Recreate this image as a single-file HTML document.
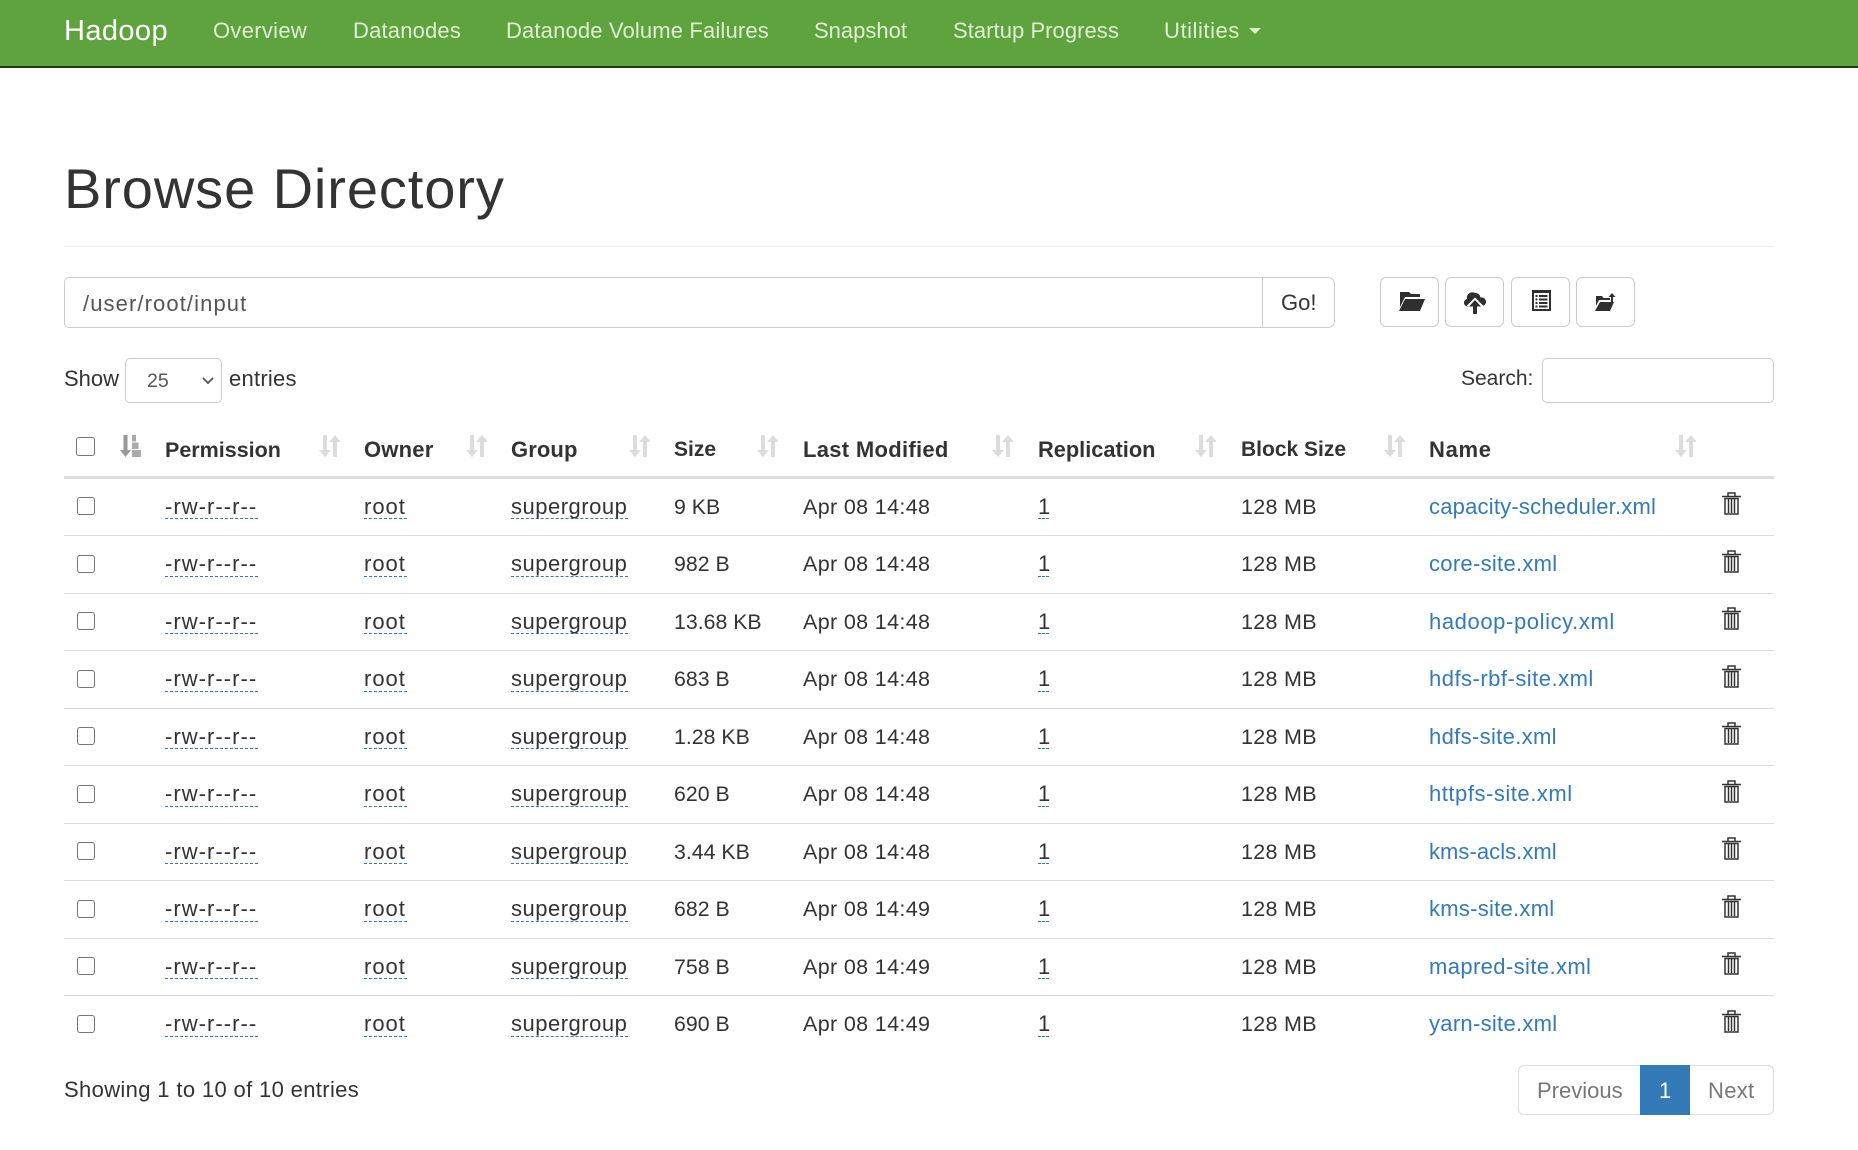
<!DOCTYPE html>
<html lang="en"><head><meta charset="utf-8"><title>Browsing HDFS</title>
<style>
html,body{margin:0;padding:0;background:#fff}
body{width:1858px;height:1150px;position:relative;overflow:hidden;font-family:"Liberation Sans",sans-serif;font-size:22px;line-height:30px;color:#333}
.a{position:absolute;white-space:nowrap}
.nav{position:absolute;left:0;top:0;width:1858px;height:66px;background:#5fa33e;border-bottom:2px solid #1f3d12}
.n{position:absolute;top:16px;color:#dfeed3;white-space:nowrap}
.box{position:absolute;box-sizing:border-box;border:1.5px solid #ccc;background:#fff}
.cb{position:absolute;box-sizing:border-box;border:1.5px solid #767676;border-radius:3px;background:#fff}
.r{position:absolute;left:0;width:1858px;height:58px}
.l{position:absolute;left:64px;width:1710px;height:1px;background:#ddd;top:57px}
.t{position:absolute;top:13.500px;white-space:nowrap}
.u{position:absolute;top:13.500px;white-space:nowrap;height:26.500px;border-bottom:1.5px dashed #337ab7;box-sizing:content-box}
.w{left:165px;width:93px;letter-spacing:1.04px}
.o{left:364px;width:43px;letter-spacing:1px}
.g{left:511px;width:117px;letter-spacing:.5px}
.e{left:1038px;width:11px}
.z{left:674px;font-size:21.3px}
.d{left:803px;font-size:21.5px;letter-spacing:.35px}
.b{left:1241px;font-size:21.5px;letter-spacing:.3px}
.k{color:#337ab7;left:1429px}
.h{position:absolute;top:435px;font-weight:bold;white-space:nowrap}
svg{position:absolute;display:block;overflow:visible}
</style></head><body>
<svg width="0" height="0" style="position:absolute"><defs>
<symbol id="s" viewBox="0 0 21 22"><path d="M4 0h4v15h4l-6 7-6-7h4zM14 22V7h-4l6-7 6 7h-4v15z" fill="#dcdcdc"/></symbol>
<symbol id="s1" viewBox="0 0 21 22"><path d="M3.500 0h4v15h3.500l-5.500 7-5.500-7h3.500z" fill="#999"/><path d="M12 0h4v6.500h-4zM12 7.500h6.500v6.500H12zM12 15h9v7h-9z" fill="#aaa"/></symbol>
<symbol id="tr" viewBox="0 0 19 23"><path d="M6 4V1h7v3M0 4.500h19M3 6.500h13v15.500H3zM6.500 7v14M9.500 7v14M12.500 7v14" fill="none" stroke="#333" stroke-width="1.500"/></symbol>
</defs></svg>

<div class="nav"></div>
<div class="a" style="left:64px;top:16px;color:#fff;font-size:29px;letter-spacing:.4px">Hadoop</div>
<div class="n" style="left:213px;letter-spacing:.3px">Overview</div>
<div class="n" style="left:353px;letter-spacing:.18px">Datanodes</div>
<div class="n" style="left:506px;letter-spacing:.15px">Datanode Volume Failures</div>
<div class="n" style="left:814px">Snapshot</div>
<div class="n" style="left:953px;letter-spacing:.05px">Startup Progress</div>
<div class="n" style="left:1164px;letter-spacing:.55px">Utilities</div>
<svg style="left:1249px;top:28px" width="12" height="7"><path d="M0 0h12L6 6z" fill="#dfeed3"/></svg>

<div class="a" style="left:64px;top:154px;font-size:56px;line-height:70px;letter-spacing:.9px">Browse Directory</div>
<div class="a" style="left:64px;top:246px;width:1710px;height:1px;background:#eee"></div>

<div class="box" style="left:64px;top:277px;width:1199px;height:51px;border-radius:5px 0 0 5px"></div>
<div class="a" style="left:83px;top:289px;color:#555;letter-spacing:1.1px">/user/root/input</div>
<div class="box" style="left:1262px;top:277px;width:73px;height:51px;border-radius:0 7px 7px 0"></div>
<div class="a" style="left:1281px;top:288px">Go!</div>

<div class="box" style="left:1380px;top:277px;width:59px;height:50px;border-radius:6px"></div>
<div class="box" style="left:1445px;top:277px;width:59px;height:50px;border-radius:6px"></div>
<div class="box" style="left:1511px;top:277px;width:59px;height:50px;border-radius:6px"></div>
<div class="box" style="left:1576px;top:277px;width:59px;height:50px;border-radius:6px"></div>
<svg style="left:1399px;top:292px" width="26" height="19"><path d="M1 0h9l2 2h9v3H6L1 15zM6 7h20l-5 12H0z" fill="#2f2f2f"/></svg>
<svg style="left:1464px;top:292px" width="22" height="22"><path d="M5 14a3.500 3.500 0 0 1-5-3 4 4 0 0 1 3-4 5.500 5.500 0 0 1 8-6 5 5 0 0 1 5.500 4.500A4.500 4.500 0 0 1 22 9.500 4 4 0 0 1 18 14z" fill="#2f2f2f"/><path d="M11 5.500l8.500 8.500H15v8H7v-8H2.500z" fill="#fff"/><path d="M11 8l6 6.500h-4V22H9v-7.500H5z" fill="#2f2f2f"/></svg>
<svg style="left:1532px;top:290px" width="19" height="21"><path fill-rule="evenodd" d="M0 0h19v21H0zM2 3v16h15V3z" fill="#2f2f2f"/><path d="M3.500 5h2v2h-2zM7 5h8.500v2H7zM3.500 8.500h2v2h-2zM7 8.500h8.500v2H7zM3.500 12h2v2h-2zM7 12h8.500v2H7zM3.500 15.500h2v2h-2zM7 15.500h8.500v2H7z" fill="#2f2f2f"/></svg>
<svg style="left:1595px;top:293px" width="21" height="18"><path d="M1 3h6l1.500 2H15v2H4L1 13zM5 9h14l-4 9H0z" fill="#2f2f2f"/><path d="M17 0l3.500 4H18v6h-2V4h-2.500z" fill="#2f2f2f"/></svg>

<div class="a" style="left:64px;top:364px">Show</div>
<div class="box" style="left:125px;top:358px;width:97px;height:45px;border-radius:5px"></div>
<div class="a" style="left:147px;top:366px;color:#555;font-size:19.500px">25</div>
<svg style="left:202px;top:377px" width="12" height="8"><path d="M1 1l5 5 5-5" fill="none" stroke="#555" stroke-width="1.800"/></svg>
<div class="a" style="left:229px;top:364px;letter-spacing:.25px">entries</div>
<div class="a" style="left:1461px;top:364px;font-size:21px">Search:</div>
<div class="box" style="left:1542px;top:358px;width:232px;height:45px;border-radius:5px"></div>

<div class="cb" style="left:76px;top:437px;width:19px;height:19px"></div>
<svg style="left:120px;top:435px" width="21" height="22"><use href="#s1"/></svg>
<div class="h" style="left:165px;font-size:21.5px">Permission</div>
<svg style="left:319px;top:435px" width="21" height="22"><use href="#s"/></svg>
<div class="h" style="left:364px;letter-spacing:.2px">Owner</div>
<svg style="left:466px;top:435px" width="21" height="22"><use href="#s"/></svg>
<div class="h" style="left:511px;letter-spacing:.1px">Group</div>
<svg style="left:629px;top:435px" width="21" height="22"><use href="#s"/></svg>
<div class="h" style="left:674px;font-size:21px">Size</div>
<svg style="left:757px;top:435px" width="21" height="22"><use href="#s"/></svg>
<div class="h" style="left:803px;letter-spacing:.3px">Last Modified</div>
<svg style="left:992px;top:435px" width="21" height="22"><use href="#s"/></svg>
<div class="h" style="left:1038px;font-size:21.8px">Replication</div>
<svg style="left:1195px;top:435px" width="21" height="22"><use href="#s"/></svg>
<div class="h" style="left:1241px;font-size:21px">Block Size</div>
<svg style="left:1384px;top:435px" width="21" height="22"><use href="#s"/></svg>
<div class="h" style="left:1429px;letter-spacing:.7px">Name</div>
<svg style="left:1675px;top:435px" width="21" height="22"><use href="#s"/></svg>
<div class="a" style="left:64px;top:476px;width:1710px;height:3px;background:#ddd"></div>

<div class="r" style="top:478px"><div class="cb" style="left:77px;top:19px;width:18px;height:18px"></div><div class="u w">-rw-r--r--</div><div class="u o">root</div><div class="u g">supergroup</div><div class="t z">9 KB</div><div class="t d">Apr 08 14:48</div><div class="u e">1</div><div class="t b">128 MB</div><div class="t k" style="letter-spacing:.21px">capacity-scheduler.xml</div><svg style="left:1722px;top:14px" width="19" height="23"><use href="#tr"/></svg><div class="l"></div></div>
<div class="r" style="top:535.500px"><div class="cb" style="left:77px;top:19px;width:18px;height:18px"></div><div class="u w">-rw-r--r--</div><div class="u o">root</div><div class="u g">supergroup</div><div class="t z">982 B</div><div class="t d">Apr 08 14:48</div><div class="u e">1</div><div class="t b">128 MB</div><div class="t k" style="letter-spacing:.29px">core-site.xml</div><svg style="left:1722px;top:14px" width="19" height="23"><use href="#tr"/></svg><div class="l"></div></div>
<div class="r" style="top:593px"><div class="cb" style="left:77px;top:19px;width:18px;height:18px"></div><div class="u w">-rw-r--r--</div><div class="u o">root</div><div class="u g">supergroup</div><div class="t z">13.68 KB</div><div class="t d">Apr 08 14:48</div><div class="u e">1</div><div class="t b">128 MB</div><div class="t k" style="letter-spacing:.6px">hadoop-policy.xml</div><svg style="left:1722px;top:14px" width="19" height="23"><use href="#tr"/></svg><div class="l"></div></div>
<div class="r" style="top:650.500px"><div class="cb" style="left:77px;top:19px;width:18px;height:18px"></div><div class="u w">-rw-r--r--</div><div class="u o">root</div><div class="u g">supergroup</div><div class="t z">683 B</div><div class="t d">Apr 08 14:48</div><div class="u e">1</div><div class="t b">128 MB</div><div class="t k" style="letter-spacing:.49px">hdfs-rbf-site.xml</div><svg style="left:1722px;top:14px" width="19" height="23"><use href="#tr"/></svg><div class="l"></div></div>
<div class="r" style="top:708px"><div class="cb" style="left:77px;top:19px;width:18px;height:18px"></div><div class="u w">-rw-r--r--</div><div class="u o">root</div><div class="u g">supergroup</div><div class="t z">1.28 KB</div><div class="t d">Apr 08 14:48</div><div class="u e">1</div><div class="t b">128 MB</div><div class="t k" style="letter-spacing:.34px">hdfs-site.xml</div><svg style="left:1722px;top:14px" width="19" height="23"><use href="#tr"/></svg><div class="l"></div></div>
<div class="r" style="top:765.500px"><div class="cb" style="left:77px;top:19px;width:18px;height:18px"></div><div class="u w">-rw-r--r--</div><div class="u o">root</div><div class="u g">supergroup</div><div class="t z">620 B</div><div class="t d">Apr 08 14:48</div><div class="u e">1</div><div class="t b">128 MB</div><div class="t k" style="letter-spacing:.53px">httpfs-site.xml</div><svg style="left:1722px;top:14px" width="19" height="23"><use href="#tr"/></svg><div class="l"></div></div>
<div class="r" style="top:823px"><div class="cb" style="left:77px;top:19px;width:18px;height:18px"></div><div class="u w">-rw-r--r--</div><div class="u o">root</div><div class="u g">supergroup</div><div class="t z">3.44 KB</div><div class="t d">Apr 08 14:48</div><div class="u e">1</div><div class="t b">128 MB</div><div class="t k" style="letter-spacing:.05px">kms-acls.xml</div><svg style="left:1722px;top:14px" width="19" height="23"><use href="#tr"/></svg><div class="l"></div></div>
<div class="r" style="top:880.500px"><div class="cb" style="left:77px;top:19px;width:18px;height:18px"></div><div class="u w">-rw-r--r--</div><div class="u o">root</div><div class="u g">supergroup</div><div class="t z">682 B</div><div class="t d">Apr 08 14:49</div><div class="u e">1</div><div class="t b">128 MB</div><div class="t k" style="letter-spacing:.27px">kms-site.xml</div><svg style="left:1722px;top:14px" width="19" height="23"><use href="#tr"/></svg><div class="l"></div></div>
<div class="r" style="top:938px"><div class="cb" style="left:77px;top:19px;width:18px;height:18px"></div><div class="u w">-rw-r--r--</div><div class="u o">root</div><div class="u g">supergroup</div><div class="t z">758 B</div><div class="t d">Apr 08 14:49</div><div class="u e">1</div><div class="t b">128 MB</div><div class="t k" style="letter-spacing:.39px">mapred-site.xml</div><svg style="left:1722px;top:14px" width="19" height="23"><use href="#tr"/></svg><div class="l"></div></div>
<div class="r" style="top:995.500px"><div class="cb" style="left:77px;top:19px;width:18px;height:18px"></div><div class="u w">-rw-r--r--</div><div class="u o">root</div><div class="u g">supergroup</div><div class="t z">690 B</div><div class="t d">Apr 08 14:49</div><div class="u e">1</div><div class="t b">128 MB</div><div class="t k" style="letter-spacing:.29px">yarn-site.xml</div><svg style="left:1722px;top:14px" width="19" height="23"><use href="#tr"/></svg></div>

<div class="a" style="left:64px;top:1075px;letter-spacing:.35px">Showing 1 to 10 of 10 entries</div>
<div class="box" style="left:1518px;top:1065px;width:256px;height:50px;border-radius:6px;border-color:#ddd"></div>
<div class="a" style="left:1640px;top:1065px;width:50px;height:50px;background:#337ab7"></div>
<div class="a" style="left:1537px;top:1076px;color:#777">Previous</div>
<div class="a" style="left:1659px;top:1076px;color:#fff">1</div>
<div class="a" style="left:1708px;top:1076px;color:#777;letter-spacing:.3px">Next</div>
</body></html>
